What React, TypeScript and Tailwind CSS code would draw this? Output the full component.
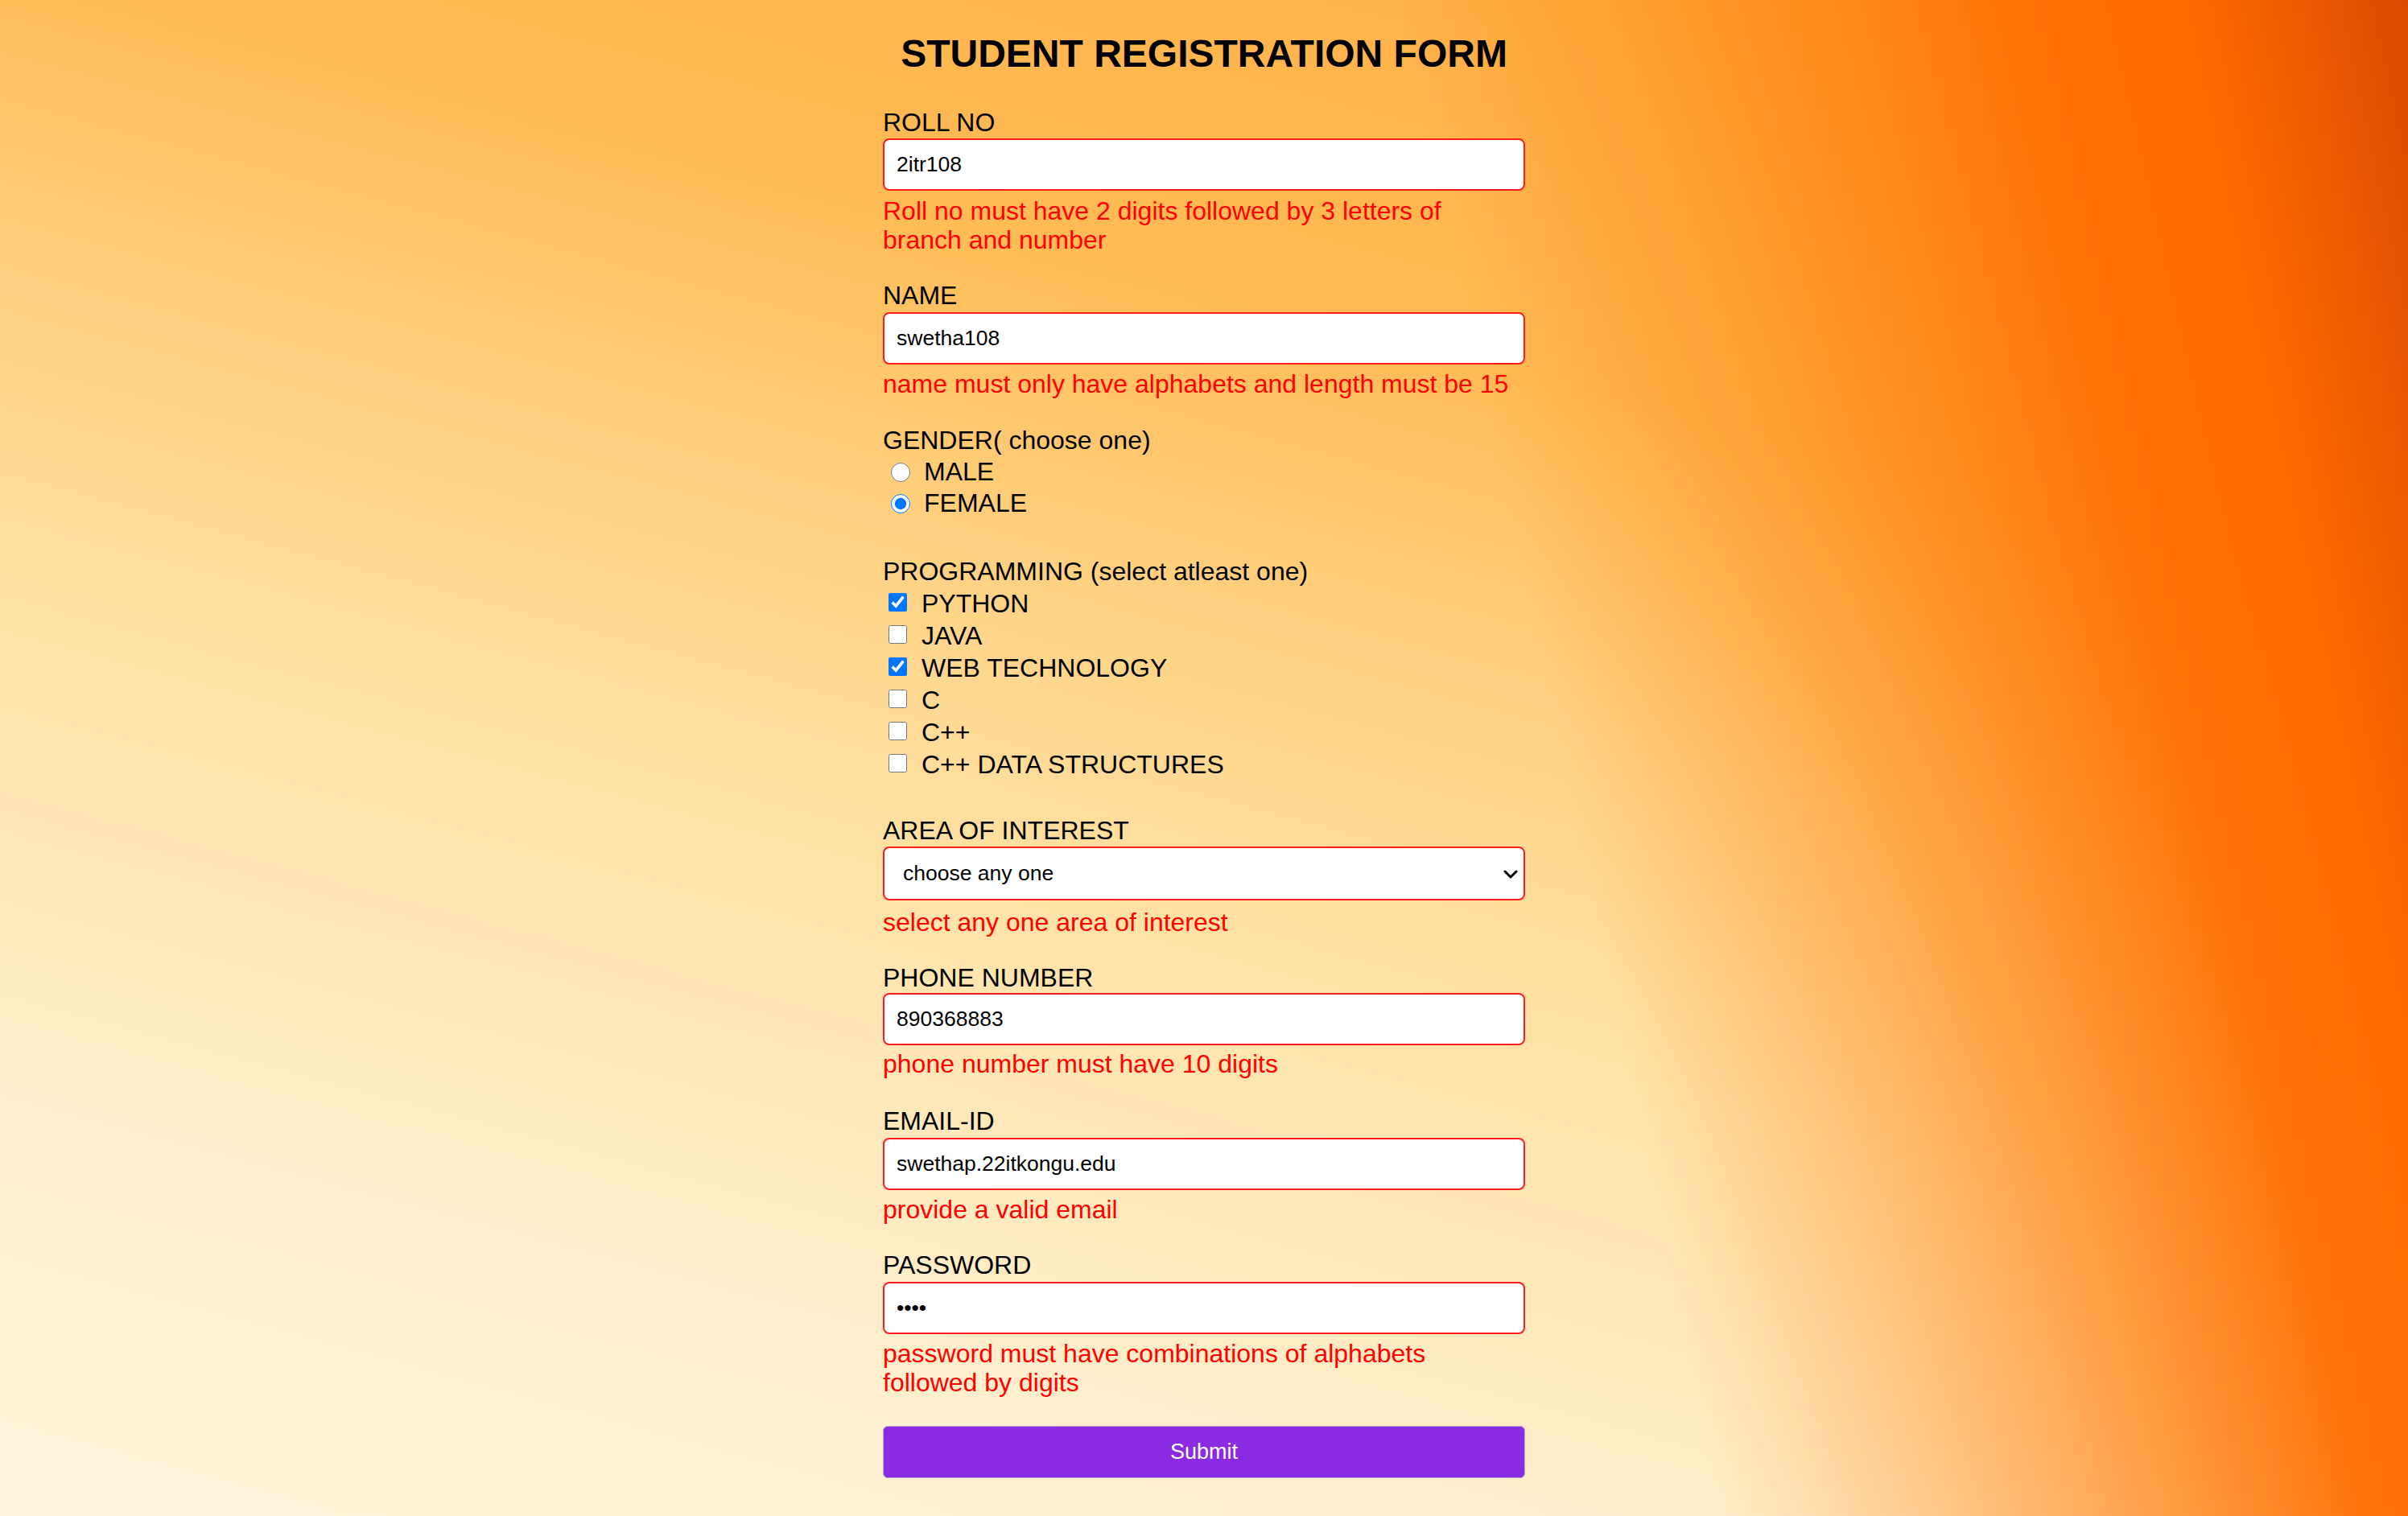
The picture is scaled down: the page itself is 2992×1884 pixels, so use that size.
import React from 'react';

const label = "block h-[36px] text-[32px] leading-[36px] text-black";
const err = "w-[794px] text-[32px] leading-[36px] text-[#ff0000]";
const box =
  "block w-full h-[65px] bg-white border-2 border-[#ff1c1c] rounded-[8px] pl-[15px] text-[26.5px] text-black outline-none";

function Choice({ type, name, text, checked }: { type: 'radio' | 'checkbox'; name: string; text: string; checked?: boolean }) {
  const isRadio = type === 'radio';
  return (
    <label className={`flex items-center text-[32px] text-black ${isRadio ? 'h-[39px] leading-[39px]' : 'h-[40px] leading-[40px]'}`}>
      <input
        type={type}
        name={name}
        defaultChecked={checked}
        className={isRadio ? 'w-[24px] h-[24px] ml-[10px] mr-[17px] m-0' : 'w-[23px] h-[23px] ml-[7px] mr-[18px] mb-[3px]'}
      />
      {text}
    </label>
  );
}

export default function App() {
  const langs = [
    { text: 'PYTHON', checked: true },
    { text: 'JAVA' },
    { text: 'WEB TECHNOLOGY', checked: true },
    { text: 'C' },
    { text: 'C++' },
    { text: 'C++ DATA STRUCTURES' },
  ];

  return (
    <div className="min-h-screen w-full font-['Liberation_Sans',Arial,sans-serif] bg-[linear-gradient(78deg,rgba(255,120,0,0)_0%,rgba(255,120,0,0)_63%,rgba(255,120,0,0.3)_71%,rgba(255,115,0,0.62)_79%,rgba(255,108,0,0.95)_87%,#ff6a00_92%,#d94a00_100%),linear-gradient(15deg,#fff4dc_0%,#ffeecb_20%,#ffe3a9_40%,#ffd283_56%,#ffbb55_72%,#ffad40_100%)]">
      <div className="pt-[39px] pb-[47px]">
        <h1 className="text-center text-[48px] leading-[55px] font-bold text-black">STUDENT REGISTRATION FORM</h1>

        <form className="mx-auto w-[798px] mt-[40px]" onSubmit={(e) => e.preventDefault()}>
          <div>
            <span className={label}>ROLL NO</span>
            <input type="text" defaultValue="2itr108" className={`${box} mt-[2px]`} />
            <p className={`${err} mt-[7px]`}>Roll no must have 2 digits followed by 3 letters of branch and number</p>
          </div>

          <div className="mt-[33px]">
            <span className={label}>NAME</span>
            <input type="text" defaultValue="swetha108" className={`${box} mt-[3px]`} />
            <p className={`${err} mt-[6px]`}>name must only have alphabets and length must be 15</p>
          </div>

          <div className="mt-[34px]">
            <span className={label}>GENDER( choose one)</span>
            <div className="mt-[2px]">
              <Choice type="radio" name="gender" text="MALE" />
              <Choice type="radio" name="gender" text="FEMALE" checked />
            </div>
          </div>

          <div className="mt-[47px]">
            <span className={label}>PROGRAMMING (select atleast one)</span>
            <div className="mt-[2px]">
              {langs.map((l) => (
                <Choice key={l.text} type="checkbox" name="prog" text={l.text} checked={l.checked} />
              ))}
            </div>
          </div>

          <div className="mt-[44px]">
            <span className={label}>AREA OF INTEREST</span>
            <div className="relative mt-[2px]">
              <select
                defaultValue=""
                className="block w-full h-[67px] appearance-none bg-white border-2 border-[#ff1c1c] rounded-[8px] pl-[23px] text-[26.5px] text-black outline-none"
              >
                <option value="">choose any one</option>
                <option value="web">Web Development</option>
                <option value="ai">Artificial Intelligence</option>
                <option value="ds">Data Science</option>
              </select>
              <svg className="pointer-events-none absolute right-[9px] top-[29px] w-[18px] h-[11px]" viewBox="0 0 18 11" fill="none">
                <polyline points="2,2 9,9 16,2" stroke="#000" strokeWidth="3" strokeLinecap="round" strokeLinejoin="round" />
              </svg>
            </div>
            <p className={`${err} mt-[9px]`}>select any one area of interest</p>
          </div>

          <div className="mt-[33px]">
            <span className={label}>PHONE NUMBER</span>
            <input type="text" defaultValue="890368883" className={`${box} mt-[1px]`} />
            <p className={`${err} mt-[5px]`}>phone number must have 10 digits</p>
          </div>

          <div className="mt-[35px]">
            <span className={label}>EMAIL-ID</span>
            <input type="text" defaultValue="swethap.22itkongu.edu" className={`${box} mt-[3px]`} />
            <p className={`${err} mt-[6px]`}>provide a valid email</p>
          </div>

          <div className="mt-[33px]">
            <span className={label}>PASSWORD</span>
            <input type="password" defaultValue="abcd" className={`${box} mt-[3px]`} />
            <p className={`${err} mt-[6px]`}>password must have combinations of alphabets followed by digits</p>
          </div>

          <button
            type="submit"
            className="mt-[36px] block w-full h-[65px] bg-[#8a2be2] border border-[#b3a7cf] rounded-[6px] text-white text-[27px]"
          >
            Submit
          </button>
        </form>
      </div>
    </div>
  );
}
